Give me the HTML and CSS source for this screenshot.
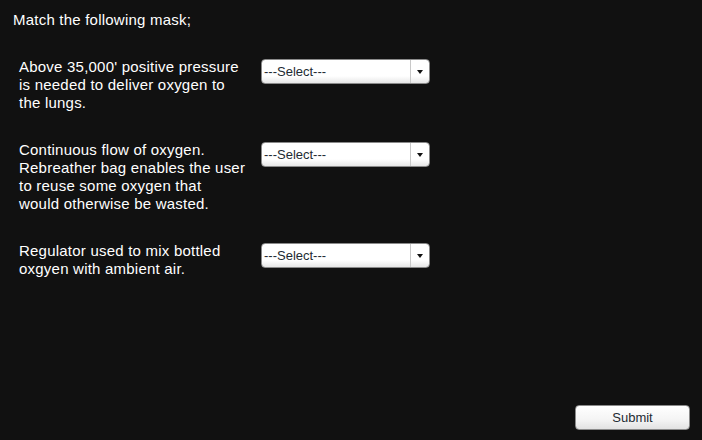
FILE: index.html
```html
<!DOCTYPE html>
<html>
<head>
<meta charset="utf-8">
<link rel="stylesheet" href="styles.css">
</head>
<body>
<div class="page">
  <p class="title">Match the following mask;</p>
  <div class="rows">
    <div class="row">
      <div class="label">Above 35,000' positive pressure<br>is needed to deliver oxygen to<br>the lungs.</div>
      <div class="select"><span class="value">---Select---</span><span class="arrow"></span></div>
    </div>
    <div class="row">
      <div class="label">Continuous flow of oxygen.<br>Rebreather bag enables the user<br>to reuse some oxygen that<br>would otherwise be wasted.</div>
      <div class="select"><span class="value">---Select---</span><span class="arrow"></span></div>
    </div>
    <div class="row">
      <div class="label">Regulator used to mix bottled<br>oxgyen with ambient air.</div>
      <div class="select"><span class="value">---Select---</span><span class="arrow"></span></div>
    </div>
  </div>
  <div class="footer">
    <button class="submit">Submit</button>
  </div>
</div>
</body>
</html>
```
FILE: styles.css
```css
html, body {
  margin: 0;
  padding: 0;
  background: #111111;
}
.page {
  width: 702px;
  height: 440px;
  box-sizing: border-box;
  padding: 11px 0 0 0;
  display: flex;
  flex-direction: column;
  font-family: "Liberation Sans", Arial, sans-serif;
  color: #ffffff;
  font-size: 15px;
  letter-spacing: 0.22px;
  line-height: 18px;
}
.title {
  margin: 0 0 0 13px;
}
.rows {
  margin-top: 29px;
  padding-left: 19px;
  display: flex;
  flex-direction: column;
  gap: 29px;
}
.row {
  display: flex;
  align-items: flex-start;
}
.label {
  width: 232px;
  margin-right: 10px;
  white-space: nowrap;
}
.select {
  margin-top: 1px;
  width: 169px;
  height: 25px;
  box-sizing: border-box;
  border: 1px solid #8a8a8a;
  border-radius: 4px;
  background: linear-gradient(#ffffff 0%, #ffffff 70%, #e6e6e6 100%);
  display: flex;
  align-items: center;
  color: #1d2b33;
  font-size: 13px;
  letter-spacing: 0;
}
.value {
  flex: 1;
  padding-left: 2px;
}
.arrow {
  width: 18px;
  height: 100%;
  border-left: 1px solid #c8c8c8;
  display: flex;
  align-items: center;
  justify-content: center;
}
.arrow::before {
  content: "";
  width: 0;
  height: 0;
  border-left: 3px solid transparent;
  border-right: 3px solid transparent;
  border-top: 4px solid #111111;
}
.footer {
  margin-top: auto;
  display: flex;
  justify-content: flex-end;
  padding: 0 12px 10px 0;
}
.submit {
  width: 115px;
  height: 25px;
  border: 1px solid #8a8a8a;
  border-radius: 4px;
  background: linear-gradient(#ffffff 0%, #f4f4f4 60%, #e2e2e2 100%);
  font-family: "Liberation Sans", Arial, sans-serif;
  font-size: 13px;
  color: #1d2b33;
  padding: 0;
}
```
